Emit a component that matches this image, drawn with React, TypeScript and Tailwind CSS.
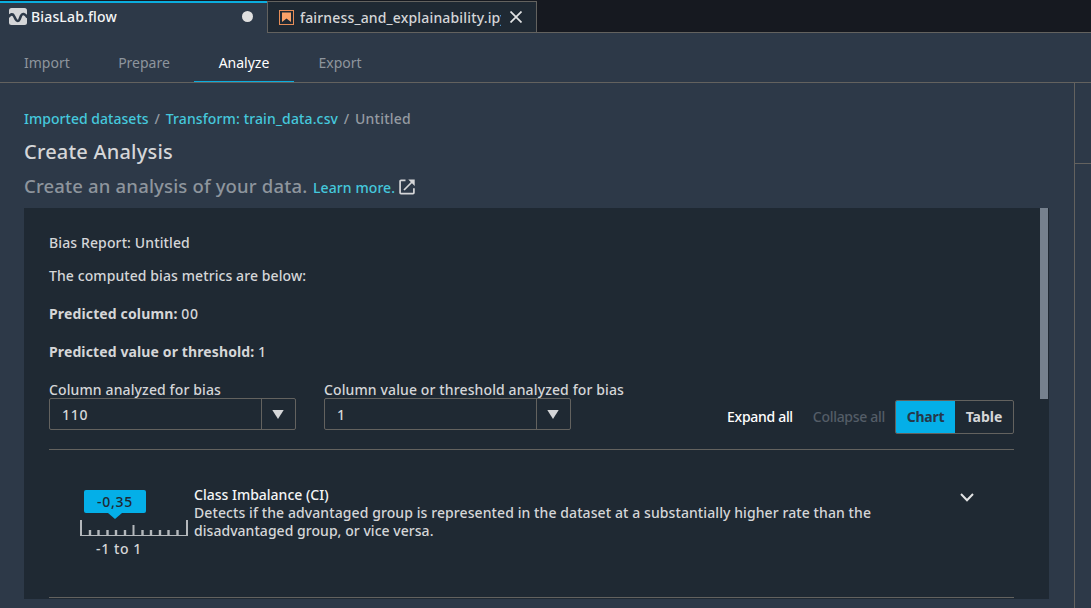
import React from "react";

const LINE = "bg-[#63625f]";

function FlowIcon() {
  return (
    <svg width="18" height="17" viewBox="0 0 18 17" className="shrink-0">
      <rect width="18" height="17" rx="2.5" fill="#d5d6d8" />
      <path d="M-0.500 9C1.500 5.800 3.800 5.500 5 8L6.800 11.500C7.800 13.400 9.600 13.400 10.500 11.500L12 7.800C13.200 5.200 15.500 5.300 18.500 9.500" fill="none" stroke="#2d3948" strokeWidth="2.600" />
    </svg>
  );
}

function NotebookIcon() {
  return (
    <svg width="15" height="15" viewBox="0 0 15 15" className="shrink-0">
      <rect x="0.500" y="0.500" width="14" height="14" fill="none" stroke="#e58d58" />
      <path d="M3 2.500h9v9.500L7.500 8.600 3 12z" fill="#f9a268" />
    </svg>
  );
}

function ExternalIcon() {
  return (
    <svg width="16" height="16" viewBox="0 0 16 16" fill="none" stroke="#d5d6d8" strokeWidth="1.700" className="shrink-0">
      <path d="M6.500 1.300H2Q1.100 1.300 1.100 2.200V13.800Q1.100 14.700 2 14.700H14Q14.900 14.700 14.900 13.800V9.300" />
      <path d="M13 3L5 11" />
      <path d="M9.300 0.500H15.700V6.900L13.500 4.700L11.500 2.700Z" fill="#d5d6d8" stroke="none" />
    </svg>
  );
}

function Select({ label, value }: { label: string; value: string }) {
  return (
    <div className="w-[247px]">
      <div className="h-4 whitespace-nowrap text-[14px] leading-4 tracking-[0.12px]">{label}</div>
      <div className="flex h-8 rounded-[2px] border border-[#63625f]">
        <div className="flex-1 pl-3 text-[14px] leading-[31px] tracking-[0.7px]">{value}</div>
        <div className="flex w-[34px] items-center justify-center border-l border-[#63625f] pr-px">
          <svg width="12" height="9" viewBox="0 0 12 9"><path d="M0.300 0H11.700L6 9z" fill="#d5d6d8" /></svg>
        </div>
      </div>
    </div>
  );
}

function Ruler() {
  return (
    <svg width="108" height="16" viewBox="0 0 108 16" className="block">
      <path d="M0 15.500H108" stroke="#b4b8bc" strokeWidth="1" />
      <path d="M1 0V16M107 0V16M53.500 5V16" stroke="#b4b8bc" strokeWidth="2" />
      <path d="M10 10V16M18.500 10V16M27.500 10V16M36 10V16M45 10V16M62.500 10V16M71 10V16M80 10V16M88.500 10V16M97.500 10V16" stroke="#b4b8bc" strokeWidth="2.400" />
    </svg>
  );
}

export default function App() {
  return (
    <div className="flex h-[608px] w-[1091px] flex-col overflow-hidden bg-[#2d3948] font-['Noto_Sans',sans-serif] text-[14px] font-medium tracking-[0.09px] text-[#d5d6d8]">
      <div className="flex h-[33px] bg-[#161920] pt-px">
        <div className="flex w-[267px] border-t-2 border-[#0badde] bg-[#2d3948] pl-[9px]">
          <div className="flex h-[27px] items-center"><FlowIcon /></div>
          <span className="ml-[4px] flex-1 whitespace-nowrap text-[14px] leading-[27px] tracking-[0.15px] text-[#f4f5f6]">BiasLab.flow</span>
          <span className="mr-[14px] mt-2 h-[11px] w-[11px] rounded-full bg-[#e0e0e0]" />
        </div>
        <div className="flex w-[270px] border border-[#63625f] bg-[#1f2933] pl-[11px]">
          <div className="flex h-[30px] items-center"><NotebookIcon /></div>
          <span className="ml-[6px] w-[201px] overflow-hidden whitespace-nowrap text-[14px] leading-[31px] tracking-[0.16px]">fairness_and_explainability.ipynb</span>
          <svg width="12" height="12" viewBox="0 0 12 12" className="ml-[9px] mt-[9px] shrink-0"><path d="M0.500 0.500L11.500 11.500M11.500 0.500L0.500 11.500" stroke="#e2e3e4" strokeWidth="1.700" /></svg>
        </div>
        <div className="flex-1 border-b border-[#63625f]" />
      </div>

      <nav className="flex h-[50px] border-b border-[#63625f] text-[14px] font-normal leading-[60px] tracking-normal text-[#8e959d]">
        <div className="w-[94px] pl-6">Import</div>
        <div className="w-[100px] text-center">Prepare</div>
        <div className="w-[100px] border-b border-[#0badde] text-center text-white">Analyze</div>
        <div className="w-[92px] text-center">Export</div>
      </nav>

      <div className="flex min-h-0 flex-1">
        <main className="flex w-[1074px] flex-col pl-6">
          <div className="mt-[25px] flex h-[22px] whitespace-pre text-[14px] leading-[22px] text-[#959ba2]">
            <span className="tracking-[0.03px] text-[#45c8dc]">Imported datasets</span>
            <span className="w-[17px] text-center">/</span>
            <span className="tracking-[0.13px] text-[#45c8dc]">Transform: train_data.csv</span>
            <span className="w-[17px] text-center">/</span>
            <span className="tracking-[0.2px]">Untitled</span>
          </div>
          <h1 className="mt-[8px] h-[28px] text-[20px] leading-[28px] tracking-[0.2px]">Create Analysis</h1>
          <div className="mt-[8px] flex h-[26px] whitespace-nowrap">
            <span className="w-[283px] text-[18.5px] leading-[23px] tracking-[0.17px] text-[#8e959d]">Create an analysis of your data.</span>
            <span className="ml-[6px] mr-[4px] text-[14px] leading-[27px] text-[#45c8dc]">Learn more.</span>
            <div className="pt-[5px]"><ExternalIcon /></div>
          </div>

          <section className="mt-[8px] flex h-[391px] w-[1025px] bg-[#1f2933]">
            <div className="w-[990px] pl-[25px] pt-[25px]">
              <p className="h-[33px] leading-5 tracking-[0.12px]">Bias Report: Untitled</p>
              <p className="h-[38px] leading-5">The computed bias metrics are below:</p>
              <p className="h-[38px] leading-5"><b className="tracking-[0.14px]">Predicted column:</b> <span className="tracking-[0.8px]">00</span></p>
              <p className="h-[40px] leading-5"><b className="tracking-[0.12px]">Predicted value or threshold:</b> 1</p>
              <div className="flex h-[67px] gap-7">
                <Select label="Column analyzed for bias" value="110" />
                <Select label="Column value or threshold analyzed for bias" value="1" />
                <div className="mt-[18px] flex flex-1 justify-end whitespace-nowrap leading-[34px]">
                  <span className="tracking-[-0.3px] text-white">Expand all</span>
                  <span className="ml-[20px] mr-[10px] tracking-[-0.3px] text-[#545d67]">Collapse all</span>
                  <div className="flex h-[34px] w-[119px] overflow-hidden rounded-[2px] border border-[#63625f] text-center font-bold leading-8">
                    <span className="w-[59px] bg-[#04afe8] tracking-[-0.3px] text-[#25384a]">Chart</span>
                    <span className="flex-1 tracking-normal">Table</span>
                  </div>
                </div>
              </div>
              <div className="h-[149px] border-y border-[#63625f]">
                <div className="flex pt-[36px]">
                  <div className="w-[145px] pl-[31px] pt-[4px]">
                    <div className="ml-1 w-[62px]">
                      <div className="h-[23px] rounded-[2px] bg-[#04afe8] text-center leading-[24px] tracking-[0.7px] text-[#1f2933]">-0,35</div>
                      <svg width="14" height="7" viewBox="0 0 14 7" className="mx-auto block"><path d="M0 0H14L7 6z" fill="#04afe8" /></svg>
                    </div>
                    <Ruler />
                    <div className="w-[78px] text-center leading-[25px] tracking-[0.6px]">-1 to 1</div>
                  </div>
                  <div className="flex-1 whitespace-nowrap leading-[18px]">
                    <div className="tracking-normal text-[#f4f5f6]">Class Imbalance (CI)</div>
                    <div>Detects if the advantaged group is represented in the dataset at a substantially higher rate than the</div>
                    <div className="tracking-[0.04px]">disadvantaged group, or vice versa.</div>
                  </div>
                  <svg width="14" height="9" viewBox="0 0 14 9" className="mr-10 mt-[7px]"><path d="M1 1L7 7.200L13 1" fill="none" stroke="#e2e3e4" strokeWidth="2" /></svg>
                </div>
              </div>
            </div>
            <div className="ml-[26px] h-[191px] w-2 bg-[#76818e]" />
          </section>
        </main>
        <aside className="flex-1 border-l border-[#63625f]">
          <div className={"mt-[80px] h-px " + LINE} />
        </aside>
      </div>
    </div>
  );
}
